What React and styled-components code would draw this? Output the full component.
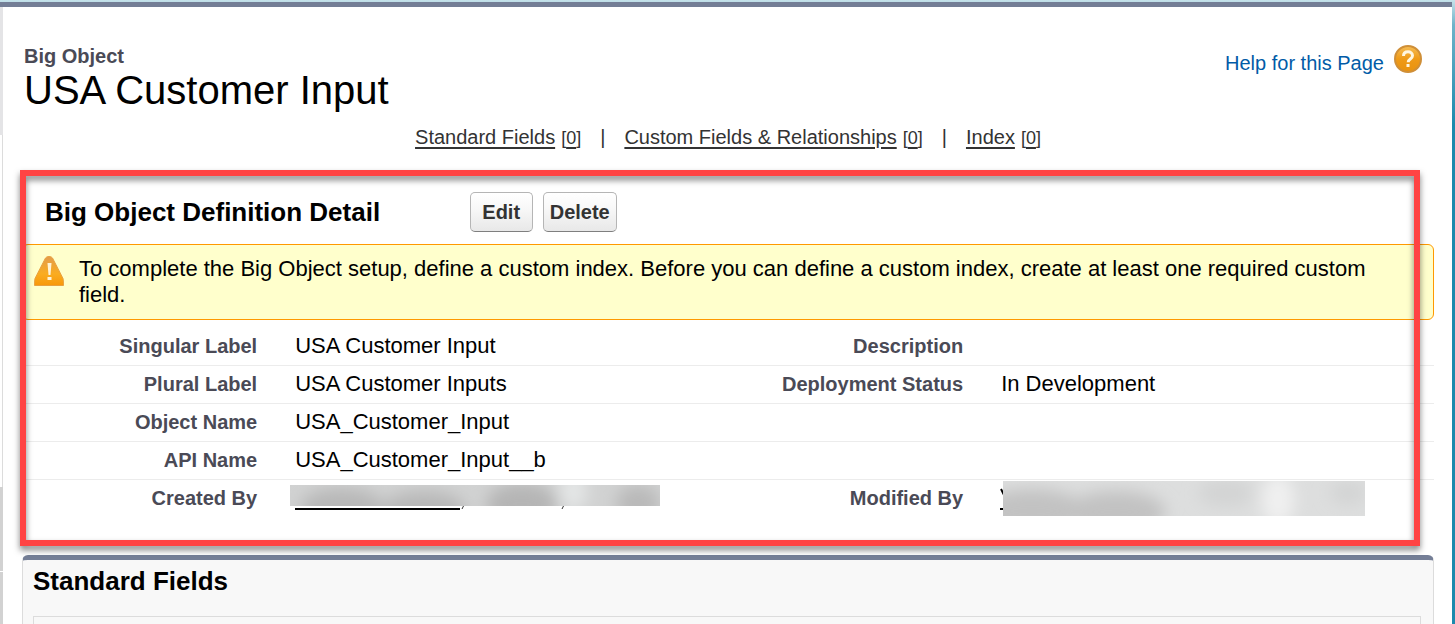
import React from 'react'
import styled, { createGlobalStyle } from 'styled-components'

const relatedLists = [
  { label: 'Standard Fields', count: 0 },
  { label: 'Custom Fields & Relationships', count: 0 },
  { label: 'Index', count: 0 },
]

function App() {
  return (
    <>
      <GlobalStyle />
      <Shell>
        <Sidebar>
          <SideBlock $top />
          <SideGap />
          <SideBlock $height={84} />
          <SideBlock $last />
        </Sidebar>

        <Main>
          <PageHeader>
            <div>
              <PageType>Big Object</PageType>
              <PageTitle>USA Customer Input</PageTitle>
            </div>
            <HelpLink href="#help">
              Help for this Page
              <HelpIcon />
            </HelpLink>
          </PageHeader>

          <ListNav>
            {relatedLists.map((list) => (
              <ListNavItem key={list.label}>
                <a href="#list">{list.label}</a>
                <Count>
                  [<a href="#list">{list.count}</a>]
                </Count>
              </ListNavItem>
            ))}
          </ListNav>

          <Detail>
            <DetailHeader>
              <DetailTitle>Big Object Definition Detail</DetailTitle>
              <Buttons>
                <Button type="button">Edit</Button>
                <Button type="button">Delete</Button>
              </Buttons>
            </DetailHeader>

            <Message>
              <WarningIcon />
              <p>
                To complete the Big Object setup, define a custom index. Before you can define a
                custom index, create at least one required custom field.
              </p>
            </Message>

            <DetailTable>
              <tbody>
                <tr>
                  <Label>Singular Label</Label>
                  <Value>USA Customer Input</Value>
                  <Label>Description</Label>
                  <Value />
                </tr>
                <tr>
                  <Label>Plural Label</Label>
                  <Value>USA Customer Inputs</Value>
                  <Label>Deployment Status</Label>
                  <Value>In Development</Value>
                </tr>
                <tr>
                  <Label>Object Name</Label>
                  <Value colSpan={3}>USA_Customer_Input</Value>
                </tr>
                <tr>
                  <Label>API Name</Label>
                  <Value colSpan={3}>USA_Customer_Input__b</Value>
                </tr>
                <tr>
                  <Label>Created By</Label>
                  <Value>
                    <CreatedBySmudge />
                  </Value>
                  <Label>Modified By</Label>
                  <Value>
                    <ModifiedBySmudge />
                  </Value>
                </tr>
              </tbody>
            </DetailTable>
            <Highlight />
          </Detail>

          <RelatedList>
            <RelatedTitle>Standard Fields</RelatedTitle>
            <RelatedBody />
          </RelatedList>
        </Main>
      </Shell>
    </>
  )
}

function HelpIcon() {
  return (
    <svg width="28" height="28" viewBox="0 0 28 28" aria-hidden="true">
      <defs>
        <linearGradient id="helpFill" x1="0" y1="0" x2="0" y2="1">
          <stop offset="0" stopColor="#f6bd55" />
          <stop offset="0.5" stopColor="#ef9a17" />
          <stop offset="1" stopColor="#e8920f" />
        </linearGradient>
      </defs>
      <circle cx="14" cy="14" r="13" fill="url(#helpFill)" stroke="#cf8f38" strokeWidth="2" />
      <path
        d="M9.500 11c0-2.800 2-4.200 4.500-4.200s4.500 1.500 4.500 4c0 3.200-4.300 3.300-4.300 6.400"
        fill="none"
        stroke="#fff6e0"
        strokeWidth="3"
      />
      <rect x="12.500" y="19" width="3" height="3" fill="#fff6e0" />
    </svg>
  )
}

function WarningIcon() {
  return (
    <svg width="30" height="30" viewBox="0 0 30 30" aria-hidden="true">
      <defs>
        <linearGradient id="warnFill" x1="0" y1="0" x2="0" y2="1">
          <stop offset="0" stopColor="#e39c4c" />
          <stop offset="0.600" stopColor="#faac20" />
          <stop offset="1" stopColor="#f8980a" />
        </linearGradient>
      </defs>
      <path
        d="M11.500 2Q12.500 0.500 15 0.500T18.500 2L29 22.500Q29.500 24 29.500 29.500H0.500Q0.500 24 1 22.500Z"
        fill="url(#warnFill)"
        stroke="#e8a040"
      />
      <path d="M13.500 7h4l-1 12h-2zM13.500 21h4v3h-4z" fill="#fff3d6" />
    </svg>
  )
}

function CreatedBySmudge() {
  return (
    <Smudge width="370" height="26" viewBox="0 0 370 26" aria-hidden="true">
      <defs>
        <filter id="soften" x="-40%" y="-80%" width="180%" height="260%">
          <feGaussianBlur stdDeviation="8" />
        </filter>
        <clipPath id="createdClip">
          <rect width="370" height="21" />
        </clipPath>
      </defs>
      <g clipPath="url(#createdClip)">
        <rect width="370" height="21" fill="#d1d2d2" />
        <g filter="url(#soften)">
          <ellipse cx="52" cy="23" rx="42" ry="20" fill="#b8b8b8" />
          <ellipse cx="134" cy="25" rx="42" ry="19" fill="#b8b8b8" />
          <ellipse cx="232" cy="19" rx="36" ry="21" fill="#b5b5b5" />
          <ellipse cx="283" cy="6" rx="14" ry="20" fill="#e4e6e6" />
          <ellipse cx="348" cy="18" rx="22" ry="18" fill="#b9b9b9" />
        </g>
      </g>
      <path d="M5 24h165" stroke="#000" strokeWidth="2" />
      <path d="M173.500 21l-1.500 3M273.500 21l-1.500 3" stroke="#333" />
    </Smudge>
  )
}

function ModifiedBySmudge() {
  return (
    <Smudge width="370" height="36" viewBox="0 0 370 36" aria-hidden="true">
      <defs>
        <clipPath id="modifiedClip">
          <rect x="7" y="1" width="362" height="35" />
        </clipPath>
      </defs>
      <path d="M5 9l3 6" stroke="#000" strokeWidth="2" />
      <path d="M4 29h4" stroke="#000" strokeWidth="2" />
      <g clipPath="url(#modifiedClip)">
        <rect width="370" height="36" fill="#dddede" />
        <g filter="url(#soften)">
          <ellipse cx="36" cy="31" rx="54" ry="22" fill="#c2c2c2" />
          <ellipse cx="120" cy="32" rx="50" ry="21" fill="#c2c2c2" />
          <ellipse cx="230" cy="13" rx="28" ry="14" fill="#d3d4d4" />
          <ellipse cx="282" cy="20" rx="16" ry="26" fill="#f0f0f0" />
          <ellipse cx="352" cy="13" rx="18" ry="12" fill="#d3d4d4" />
        </g>
      </g>
    </Smudge>
  )
}

const GlobalStyle = createGlobalStyle`
  body {
    margin: 0;
    background: #fff;
    color: #000;
    font-family: "Liberation Sans", Arial, sans-serif;
  }

  * {
    box-sizing: border-box;
  }
`

const Shell = styled.div`
  display: flex;
  min-height: 100vh;
  border-top: 2px solid #c5e2ea;
  border-right: 3px solid #1c8aad;
  border-image: linear-gradient(#c5e2ea, #6fb3c9 4%, #1c8aad 20%, #1c8aad) 2 3 0 0;
`

const Sidebar = styled.aside`
  display: flex;
  flex-direction: column;
  flex: none;
  width: 3px;
  border-top: 5px solid #747e96;
`

const SideBlock = styled.div`
  height: ${(props) => (props.$top ? '128px' : `${props.$height}px`)};
  flex: ${(props) => (props.$last ? '0 0 52px' : 'none')};
  margin-bottom: ${(props) => (props.$height ? '1px' : '0')};
  background: ${(props) => (props.$top ? '#e4e4e6' : '#d2d2d2')};
`

const SideGap = styled.div`
  flex: 1;
  border-right: 1px solid #dcdcdc;
`

const Main = styled.main`
  display: flex;
  flex-direction: column;
  flex: 1;
  padding: 37px 18px 0 19px;
  border-top: 5px solid #747e96;
`

const PageHeader = styled.header`
  display: flex;
  justify-content: space-between;
  align-items: flex-start;
  padding: 0 12px 0 2px;
`

const PageType = styled.div`
  color: #4a4a56;
  font-size: 20px;
  font-weight: bold;
  line-height: 24px;
`

const PageTitle = styled.h1`
  margin: 0;
  font-size: 40px;
  font-weight: normal;
  line-height: 44px;
`

const HelpLink = styled.a`
  display: flex;
  gap: 10px;
  padding-top: 1px;
  color: #015ba7;
  font-size: 20px;
  line-height: 36px;
  text-decoration: none;
`

const ListNav = styled.nav`
  display: flex;
  justify-content: center;
  margin: 12px 0 19px;
  color: #333;
  font-size: 20px;
  line-height: 26px;

  a {
    color: #333;
    text-decoration: underline;
    text-decoration-thickness: 2px;
    text-underline-offset: 3px;
  }
`

const ListNavItem = styled.span`
  & + &::before {
    content: '|';
    padding: 0 19px;
  }
`

const Count = styled.span`
  margin-left: 6px;
  font-size: 18px;
`

const Detail = styled.section`
  position: relative;
  padding: 22px 0 29px;
`

const DetailHeader = styled.div`
  display: flex;
  align-items: center;
  gap: 8px;
  padding: 0 0 12px 23px;
`

const DetailTitle = styled.h2`
  flex: 0 0 30%;
  margin: 0;
  font-size: 26px;
  line-height: 32px;
  white-space: nowrap;
`

const Buttons = styled.div`
  display: flex;
  gap: 10px;
`

const Button = styled.button`
  min-width: 63px;
  height: 40px;
  padding: 0 6px;
  border: 1px solid #b5b5b5;
  border-bottom-color: #7f7f7f;
  border-radius: 5px;
  background: linear-gradient(#fff, #f8f8f8 40%, #e8e8e8);
  color: #333;
  font-family: inherit;
  font-size: 20px;
  font-weight: bold;
`

const Message = styled.div`
  display: flex;
  align-items: flex-start;
  gap: 15px;
  padding: 11px 24px 11px 11px;
  border: 1px solid #ff9900;
  border-radius: 6px;
  background: #ffffcc;
  font-size: 22px;
  line-height: 26px;

  p {
    margin: 0;
  }

  svg {
    flex: none;
  }
`

const DetailTable = styled.table`
  width: 100%;
  margin-top: 7px;
  border-collapse: collapse;
  table-layout: fixed;

  tr:not(:last-child) {
    border-bottom: 1px solid #ececec;
  }
`

const Label = styled.th`
  width: 18%;
  height: 38px;
  padding: 0 19px 0 0;
  color: #4a4a56;
  font-size: 20px;
  line-height: 26px;
  text-align: right;
`

const Value = styled.td`
  width: 32%;
  padding: 0 0 0 19px;
  font-size: 22px;
  line-height: 26px;
`

const Smudge = styled.svg`
  display: block;
  margin-left: -5px;
`

// Callout frame laid over the detail section
const Highlight = styled.div`
  position: absolute;
  inset: 0 14px 0 -2px;
  border: 6px solid #ff4343;
  filter: drop-shadow(0 4px 3px rgba(0, 0, 0, 0.5));
  pointer-events: none;
`

const RelatedList = styled.section`
  display: flex;
  flex-direction: column;
  flex: 1;
  margin-top: 9px;
  padding: 5px 12px 0 10px;
  border: 1px solid #dcdcdc;
  border-top: 5px solid #747e96;
  border-bottom: 0;
  border-radius: 6px 6px 0 0;
  background: #f8f8f8;
`

const RelatedTitle = styled.h2`
  margin: 0 0 19px;
  font-size: 26px;
  line-height: 32px;
`

const RelatedBody = styled.div`
  flex: 1;
  min-height: 8px;
  border: 1px solid #dcdcdc;
  border-bottom: 0;
`

export default App
